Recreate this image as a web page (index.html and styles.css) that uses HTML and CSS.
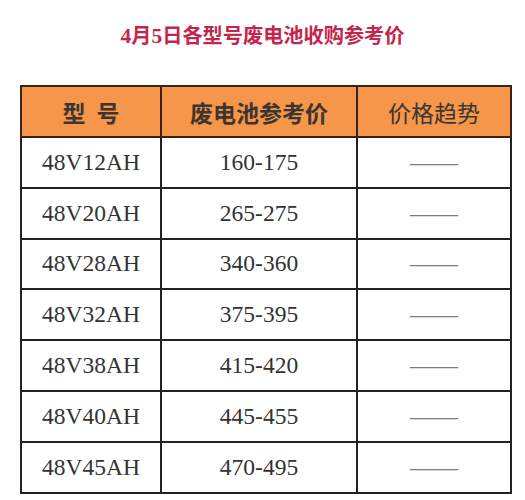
FILE: index.html
```html
<!DOCTYPE html>
<html lang="zh">
<head>
<meta charset="utf-8">
<link rel="stylesheet" href="styles.css">
</head>
<body>
<div class="page">
  <h1 class="title"><span class="num">4</span>月<span class="num">5</span>日各型号废电池收购参考价</h1>
  <table class="prices">
    <thead>
      <tr>
        <th class="c1 bold"><span class="spaced">型 号</span></th>
        <th class="c2 bold">废电池参考价</th>
        <th class="c3">价格趋势</th>
      </tr>
    </thead>
    <tbody>
      <tr><td>48V12AH</td><td>160-175</td><td class="dash">——</td></tr>
      <tr><td>48V20AH</td><td>265-275</td><td class="dash">——</td></tr>
      <tr><td>48V28AH</td><td>340-360</td><td class="dash">——</td></tr>
      <tr><td>48V32AH</td><td>375-395</td><td class="dash">——</td></tr>
      <tr><td>48V38AH</td><td>415-420</td><td class="dash">——</td></tr>
      <tr><td>48V40AH</td><td>445-455</td><td class="dash">——</td></tr>
      <tr><td>48V45AH</td><td>470-495</td><td class="dash">——</td></tr>
    </tbody>
  </table>
</div>
</body>
</html>
```

FILE: styles.css
```css
html, body {
  margin: 0;
  padding: 0;
  background: #ffffff;
}

.page {
  width: 525px;
  height: 500px;
  overflow: hidden;
  padding-top: 22px;
  box-sizing: border-box;
}

.title {
  margin: 0;
  height: 26px;
  line-height: 26px;
  text-align: center;
  font-family: "Noto Sans CJK SC", sans-serif;
  font-size: 20.2px;
  font-weight: 700;
  color: #c5254c;
}

.title .num {
  font-family: "Liberation Serif", serif;
  font-weight: 700;
  font-size: 21.5px;
}

.prices {
  margin: 37px 0 0 20px;
  width: 484px;
  border-collapse: collapse;
  table-layout: fixed;
}

.prices th,
.prices td {
  border: 2px solid #222222;
  height: 48.8px;
  padding: 0;
  text-align: center;
  vertical-align: middle;
}

.prices th {
  height: 49px;
  background: #f6964a;
  border-color: #3a2218;
  font-family: "Noto Sans CJK SC", sans-serif;
  font-size: 23px;
  font-weight: 400;
  color: #3c3530;
}

.prices th.bold {
  font-weight: 700;
}

.spaced {
  word-spacing: 6px;
}

.c1 { width: 138px; }
.c2 { width: 194px; }
.c3 { width: 152px; }

.prices td {
  font-family: "Liberation Serif", serif;
  font-size: 23.5px;
  color: #333333;
}

.prices td.dash {
  font-size: 24px;
  color: #808080;
}
```
